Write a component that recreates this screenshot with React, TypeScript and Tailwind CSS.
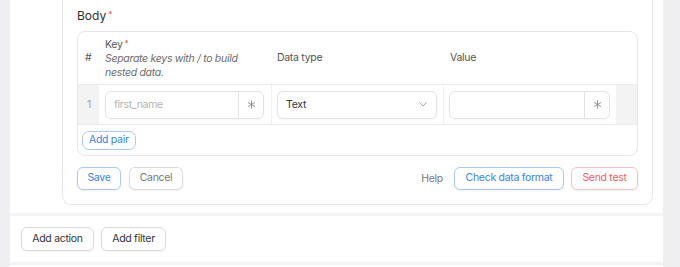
import React from "react";

const Star = () => (
  <span className="text-[#ef4444] text-[8px] align-top relative -top-[2px] ml-[2px]">*</span>
);

const Asterisk = () => (
  <svg width="9" height="9" viewBox="0 0 10 10" className="text-[#8a8a8a]">
    <g stroke="currentColor" strokeWidth="1" strokeLinecap="round">
      <line x1="5" y1="0.8" x2="5" y2="9.2" />
      <line x1="1.4" y1="2.9" x2="8.6" y2="7.1" />
      <line x1="1.4" y1="7.1" x2="8.6" y2="2.9" />
    </g>
  </svg>
);

const Chevron = () => (
  <svg width="8" height="5" viewBox="0 0 8 5" className="text-[#9a9a9a]">
    <path d="M0.8 0.8 L4 4 L7.2 0.8" fill="none" stroke="currentColor" strokeWidth="0.9" strokeLinecap="round" strokeLinejoin="round" />
  </svg>
);

const Btn = ({ children, cls }: { children: React.ReactNode; cls: string }) => (
  <button
    className={
      "h-[23px] rounded-[6px] border bg-white text-[10.5px] tracking-[-0.3px] leading-none shadow-[0_1px_2px_rgba(0,0,0,0.06)] flex items-center justify-center " +
      cls
    }
  >
    {children}
  </button>
);

export default function App() {
  return (
    <div
      className="w-[680px] h-[267px] flex bg-[#efeff1] overflow-hidden"
      style={{ fontFamily: "Inter, 'Noto Sans', sans-serif" }}
    >
      <div className="w-[10px] shrink-0" />
      <div className="w-[653px] shrink-0 bg-white flex flex-col">
        <div className="pl-[52px] pr-[10px] pb-[8px]">
          <div className="border-x border-b border-[#e7e7e9] rounded-b-[9px] px-[14px] pt-[8px] pb-[14px]">
            <div className="text-[12px] leading-4 text-[#2f2f2f] mb-[7px]">
              Body
              <Star />
            </div>
            <div className="border border-[#e7e7e9] rounded-[8px] overflow-hidden">
              <div className="flex h-[53px] border-b border-[#ececee] text-[10.5px] tracking-[-0.3px] text-[#555]">
                <div className="w-[21px] shrink-0 flex items-center pl-[7px]">#</div>
                <div className="w-[173px] shrink-0 pl-[6px] pt-[6px] leading-[14px]">
                  <div>
                    Key
                    <Star />
                  </div>
                  <div className="italic text-[#6b6b6b]">Separate keys with / to build</div>
                  <div className="italic text-[#6b6b6b]">nested data.</div>
                </div>
                <div className="w-[172px] shrink-0 pl-[5px] flex items-center">Data type</div>
                <div className="w-[172px] shrink-0 pl-[6px] flex items-center">Value</div>
                <div className="flex-1" />
              </div>
              <div className="flex h-[40px] border-b border-[#ececee] tracking-[-0.3px]">
                <div className="w-[21px] shrink-0 bg-[#f3f3f4] flex items-center pl-[9px] text-[10.5px] text-[#a3a3a3]">1</div>
                <div className="w-[173px] shrink-0 border-r border-[#f0f0f1] pl-[6px] pr-[7px] flex items-center">
                  <div className="flex-1 h-[28px] border border-[#e3e3e5] rounded-[6px] flex shadow-[0_1px_2px_rgba(0,0,0,0.04)]">
                    <div className="flex-1 flex items-center pl-[8px] text-[10.5px] text-[#b3b3b3]">first_name</div>
                    <div className="w-[25px] border-l border-[#e3e3e5] flex items-center justify-center">
                      <Asterisk />
                    </div>
                  </div>
                </div>
                <div className="w-[172px] shrink-0 border-r border-[#f0f0f1] pl-[5px] pr-[6px] flex items-center">
                  <div className="flex-1 h-[28px] border border-[#e3e3e5] rounded-[6px] flex items-center justify-between pl-[8px] pr-[9px] text-[10.5px] text-[#333] shadow-[0_1px_2px_rgba(0,0,0,0.04)]">
                    <span>Text</span>
                    <Chevron />
                  </div>
                </div>
                <div className="w-[172px] shrink-0 pl-[5px] pr-[6px] flex items-center">
                  <div className="flex-1 h-[28px] border border-[#e3e3e5] rounded-[6px] flex shadow-[0_1px_2px_rgba(0,0,0,0.04)]">
                    <div className="flex-1" />
                    <div className="w-[25px] border-l border-[#e3e3e5] flex items-center justify-center">
                      <Asterisk />
                    </div>
                  </div>
                </div>
                <div className="flex-1 bg-[#f3f3f4]" />
              </div>
              <div className="flex pl-[4px] pt-[6px] pb-[5px]">
                <button className="h-[19px] px-[6px] rounded-[7px] border border-[#a9c8f3] text-[10.5px] tracking-[-0.3px] leading-none text-[#3b82e6] bg-white">
                  Add pair
                </button>
              </div>
            </div>
            <div className="flex items-center justify-between mt-[11px]">
              <div className="flex gap-[8px]">
                <Btn cls="w-[44px] border-[#a9c8f3] text-[#3b82e6]">Save</Btn>
                <Btn cls="w-[54px] border-[#dcdcde] text-[#777]">Cancel</Btn>
              </div>
              <div className="flex items-center">
                <span className="text-[10.5px] tracking-[-0.3px] text-[#777] mr-[11px]">Help</span>
                <Btn cls="w-[110px] border-[#a9c8f3] text-[#3b82e6] mr-[7px]">Check data format</Btn>
                <Btn cls="w-[67px] border-[#f6c3c3] text-[#ef5e5e]">Send test</Btn>
              </div>
            </div>
          </div>
        </div>
        <div className="h-[3px] bg-[#f4f4f5]" />
        <div className="flex gap-[7px] pl-[11px] py-[11px]">
          <Btn cls="h-[24px] w-[73px] border-[#dcdcde] text-[#333]">Add action</Btn>
          <Btn cls="h-[24px] w-[65px] border-[#dcdcde] text-[#333]">Add filter</Btn>
        </div>
        <div className="h-[3px] bg-[#f4f4f5]" />
        <div className="flex-1" />
      </div>
    </div>
  );
}
